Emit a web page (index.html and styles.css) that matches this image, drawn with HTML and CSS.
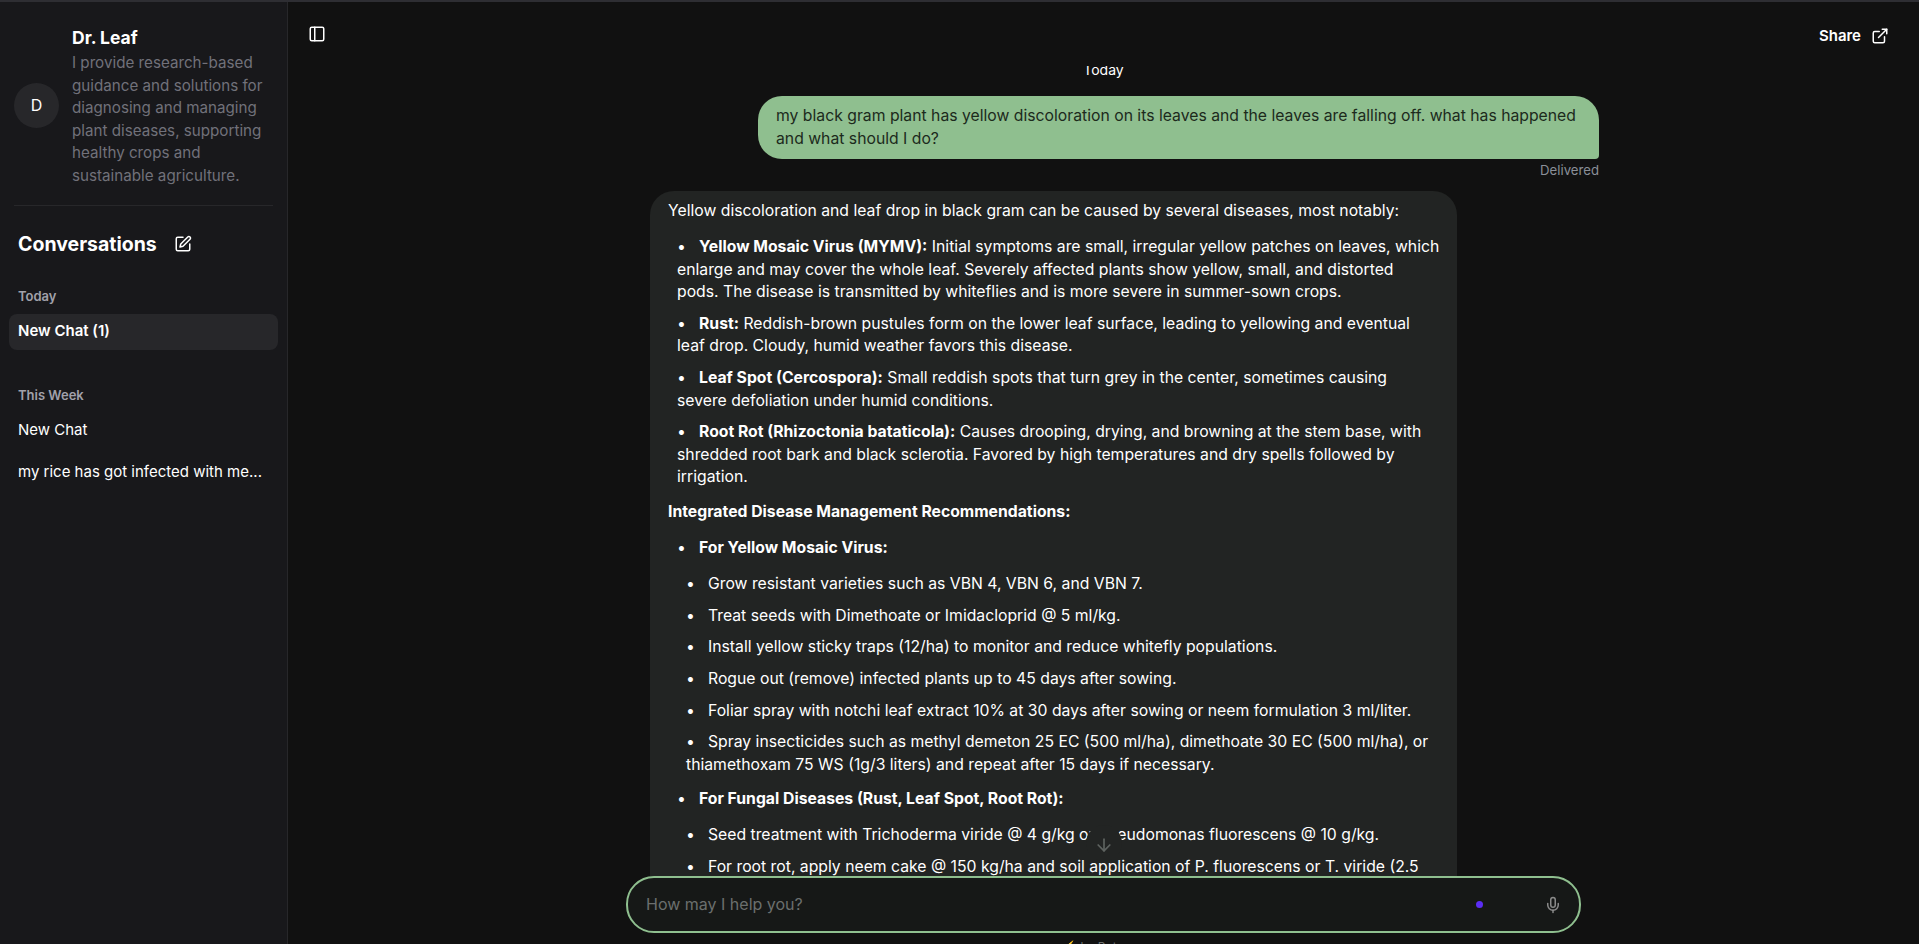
FILE: index.html
```html
<!DOCTYPE html>
<html lang="en">
<head>
  <meta charset="UTF-8">
  <meta name="viewport" content="width=device-width, initial-scale=1.0">
  <title>Dr. Leaf</title>
  <link rel="stylesheet" href="styles.css">
</head>
<body>

  <div class="app">

    <!-- Sidebar -->
    <aside class="sidebar">
      <div class="agent">
        <div class="avatar">D</div>
        <div class="agent-info">
          <div class="agent-name">Dr. Leaf</div>
          <div class="agent-desc">I provide research-based guidance and solutions for diagnosing and managing plant diseases, supporting healthy crops and sustainable agriculture.</div>
        </div>
      </div>

      <div class="conv-head">
        <h2>Conversations</h2>
        <svg class="icon" viewBox="0 0 24 24"><path d="M12 3H5a2 2 0 0 0-2 2v14a2 2 0 0 0 2 2h14a2 2 0 0 0 2-2v-7"/><path d="M18.375 2.625a2.121 2.121 0 1 1 3 3L12 15l-4 1 1-4Z"/></svg>
      </div>

      <div class="group-label">Today</div>
      <div class="chat-item active">New Chat (1)</div>

      <div class="group-label week">This Week</div>
      <div class="chat-item">New Chat</div>
      <div class="chat-item">my rice has got infected with me...</div>
    </aside>

    <!-- Chat -->
    <main class="main">
      <header class="topbar">
        <svg class="icon" viewBox="0 0 24 24"><rect x="3" y="3" width="18" height="18" rx="2"/><path d="M9 3v18"/></svg>
        <div class="share">
          <span>Share</span>
          <svg class="icon" viewBox="0 0 24 24"><path d="M15 3h6v6"/><path d="M10 14 21 3"/><path d="M18 13v6a2 2 0 0 1-2 2H5a2 2 0 0 1-2-2V8a2 2 0 0 1 2-2h6"/></svg>
        </div>
      </header>

      <div class="messages">
        <div class="thread">
          <div class="day">Today</div>

          <div class="user-row">
            <div class="bubble-user">my black gram plant has yellow discoloration on its leaves and the leaves are falling off. what has happened and what should I do?</div>
            <div class="status">Delivered</div>
          </div>

          <div class="bubble-bot">
            <p>Yellow discoloration and leaf drop in black gram can be caused by several diseases, most notably:</p>
            <ul>
              <li><strong>Yellow Mosaic Virus (MYMV):</strong> Initial symptoms are small, irregular yellow patches on leaves, which enlarge and may cover the whole leaf. Severely affected plants show yellow, small, and distorted<br>pods. The disease is transmitted by whiteflies and is more severe in summer-sown crops.</li>
              <li><strong>Rust:</strong> Reddish-brown pustules form on the lower leaf surface, leading to yellowing and eventual<br>leaf drop. Cloudy, humid weather favors this disease.</li>
              <li><strong>Leaf Spot (Cercospora):</strong> Small reddish spots that turn grey in the center, sometimes causing<br>severe defoliation under humid conditions.</li>
              <li><strong>Root Rot (Rhizoctonia bataticola):</strong> Causes drooping, drying, and browning at the stem base, with shredded root bark and black sclerotia. Favored by high temperatures and dry spells followed by irrigation.</li>
            </ul>
            <p><strong>Integrated Disease Management Recommendations:</strong></p>
            <ul class="head">
              <li><strong>For Yellow Mosaic Virus:</strong></li>
            </ul>
            <ul class="sub">
              <li>Grow resistant varieties such as VBN 4, VBN 6, and VBN 7.</li>
              <li>Treat seeds with Dimethoate or Imidacloprid @ 5 ml/kg.</li>
              <li>Install yellow sticky traps (12/ha) to monitor and reduce whitefly populations.</li>
              <li>Rogue out (remove) infected plants up to 45 days after sowing.</li>
              <li>Foliar spray with notchi leaf extract 10% at 30 days after sowing or neem formulation 3 ml/liter.</li>
              <li>Spray insecticides such as methyl demeton 25 EC (500 ml/ha), dimethoate 30 EC (500 ml/ha), or thiamethoxam 75 WS (1g/3 liters) and repeat after 15 days if necessary.</li>
            </ul>
            <ul class="head">
              <li><strong>For Fungal Diseases (Rust, Leaf Spot, Root Rot):</strong></li>
            </ul>
            <ul class="sub">
              <li>Seed treatment with Trichoderma viride @ 4 g/kg or Pseudomonas fluorescens @ 10 g/kg.</li>
              <li>For root rot, apply neem cake @ 150 kg/ha and soil application of P. fluorescens or T. viride (2.5 kg/ha).</li>
            </ul>
          </div>
        </div>

        <div class="scroll-down">
          <svg class="icon arrow" viewBox="0 0 24 24"><path d="M12 5v14"/><path d="m19 12-7 7-7-7"/></svg>
        </div>
      </div>

      <div class="composer">
        <div class="input-box">
          <span class="placeholder">How may I help you?</span>
          <span class="dot"></span>
          <svg class="icon mic" viewBox="0 0 24 24"><path d="M12 2a3 3 0 0 0-3 3v7a3 3 0 0 0 6 0V5a3 3 0 0 0-3-3Z"/><path d="M19 10v2a7 7 0 0 1-14 0v-2"/><path d="M12 19v3"/></svg>
        </div>
        <div class="powered"><span class="bolt">⚡</span> by Bot</div>
      </div>
    </main>

  </div>

</body>
</html>
```

FILE: styles.css
```css
* {
  box-sizing: border-box;
}

html, body {
  height: 100%;
}

body {
  margin: 0;
  overflow: hidden;
  background-color: #111111;
  color: #ffffff;
  font-family: Inter, "Noto Sans", sans-serif;
  font-size: 16px;
}

.app {
  display: flex;
  height: 100%;
  border-top: 2px solid #2e2e33;
}

.icon {
  width: 18px;
  height: 18px;
  flex-shrink: 0;
  fill: none;
  stroke: currentColor;
  stroke-width: 2;
  stroke-linecap: round;
  stroke-linejoin: round;
}

/* Sidebar */
.sidebar {
  width: 288px;
  flex-shrink: 0;
  padding: 0 9px;
  background-color: #18181b;
  border-right: 1px solid #27272a;
}

.agent {
  display: flex;
  align-items: center;
  gap: 13px;
  margin: 0 5px;
  padding: 25px 0 18px;
  border-bottom: 1px solid #27272a;
}

.avatar {
  width: 45px;
  height: 45px;
  flex-shrink: 0;
  display: flex;
  justify-content: center;
  align-items: center;
  margin-top: -4px;
  border-radius: 50%;
  background-color: #27272a;
  font-size: 16px;
}

.agent-name {
  margin-bottom: 3px;
  font-size: 17.5px;
  font-weight: 700;
  line-height: 22px;
}

.agent-desc {
  color: #71717a;
  font-size: 15.2px;
  line-height: 22.5px;
}

.conv-head {
  display: flex;
  align-items: center;
  gap: 17px;
  margin: 24px 0 28px;
  padding-left: 9px;
}

.conv-head h2 {
  margin: 0;
  font-size: 19.5px;
  font-weight: 700;
  line-height: 28px;
}

.group-label {
  padding-left: 9px;
  margin-bottom: 8px;
  color: #a1a1aa;
  font-size: 13px;
  font-weight: 600;
  line-height: 20px;
}

.group-label.week {
  margin-top: 35px;
  margin-bottom: 7px;
}

.chat-item {
  height: 36px;
  padding: 0 9px;
  margin-bottom: 6px;
  border-radius: 8px;
  font-size: 15px;
  line-height: 36px;
  white-space: nowrap;
}

.chat-item.active {
  background-color: #27272a;
  font-weight: 600;
  line-height: 34px;
}

/* Chat */
.main {
  flex: 1;
  min-width: 0;
  display: flex;
  flex-direction: column;
}

.topbar {
  height: 64px;
  flex-shrink: 0;
  display: flex;
  justify-content: space-between;
  align-items: center;
  padding: 0 30px 0 20px;
}

.share {
  display: flex;
  align-items: center;
  gap: 10px;
  margin-top: 3px;
  font-size: 15px;
  font-weight: 600;
}

.messages {
  flex: 1;
  min-height: 0;
  position: relative;
  overflow: hidden;
  padding-left: 42px;
}

.thread {
  width: 949px;
  margin: 0 auto;
}

.day {
  height: 36px;
  margin-top: -6px;
  padding-right: 42px;
  text-align: center;
  font-size: 14px;
  line-height: 20px;
}

.user-row {
  display: flex;
  flex-direction: column;
  align-items: flex-end;
}

.bubble-user {
  width: 841px;
  padding: 8px 18px 9px;
  border-radius: 24px 24px 4px 24px;
  background-color: #8fbf8f;
  color: #1c2a1c;
  font-size: 15.75px;
  line-height: 23px;
}

.status {
  margin-top: 1px;
  color: #8a8f98;
  font-size: 13.2px;
  line-height: 20px;
}

.bubble-bot {
  width: 807px;
  margin-top: 11px;
  padding: 8.5px 14px 8px 18px;
  border-radius: 24px;
  background-color: #222423;
  font-size: 15.75px;
  line-height: 22.6px;
}

.bubble-bot p {
  margin: 0 0 14px;
}

.bubble-bot strong {
  font-weight: 700;
}

.bubble-bot ul {
  margin: 0 0 11.5px;
  padding: 0 0 0 9px;
  list-style: none;
}

.bubble-bot ul.head {
  margin-bottom: 13.5px;
}

.bubble-bot ul.sub {
  padding-left: 18px;
}

.bubble-bot li {
  margin-bottom: 9px;
}

.bubble-bot li::before {
  content: "•";
  display: inline-block;
  width: 22px;
}

.scroll-down {
  position: absolute;
  left: 50%;
  bottom: 15px;
  width: 36px;
  height: 36px;
  margin-left: -18px;
  padding-top: 4px;
  display: flex;
  justify-content: center;
  align-items: center;
  border-radius: 50%;
  background-color: #222423;
  color: #5e6360;
}

.arrow {
  width: 20px;
  height: 20px;
}

.composer {
  flex-shrink: 0;
  height: 68px;
  position: relative;
}

.input-box {
  width: 955px;
  height: 57px;
  margin: 0 auto;
  display: flex;
  align-items: center;
  padding: 0 17px 0 18px;
  border: 2px solid #8fbf8f;
  border-radius: 28px;
  background-color: #161817;
}

.placeholder {
  flex: 1;
  padding-bottom: 1px;
  color: #6b6f6e;
  font-size: 16px;
}

.dot {
  width: 7px;
  height: 7px;
  margin-right: 61px;
  border-radius: 50%;
  background-color: #5b2df5;
}

.mic {
  color: #8a8a8a;
}

.powered {
  margin-top: 6px;
  padding-right: 28px;
  text-align: center;
  color: #6b6f6e;
  font-size: 12px;
  line-height: 16px;
}

.bolt {
  color: #f0932b;
}
```
